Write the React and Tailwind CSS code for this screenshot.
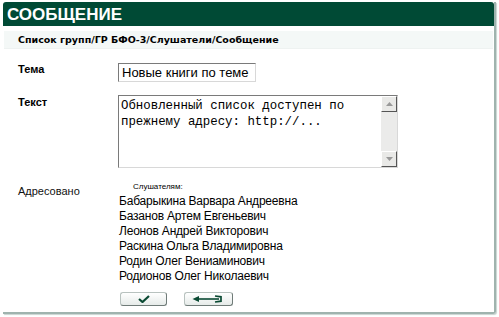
import React from "react";

const names = [
  "Бабарыкина Варвара Андреевна",
  "Базанов Артем Евгеньевич",
  "Леонов Андрей Викторович",
  "Раскина Ольга Владимировна",
  "Родин Олег Вениаминович",
  "Родионов Олег Николаевич",
];

export default function App() {
  return (
    <div className="w-[499px] h-[317px] bg-white overflow-hidden pt-[2px] pl-[3px]" style={{ fontFamily: "'Liberation Sans', Arial, sans-serif" }}>
      <div className="w-[493px] h-[312px] flex flex-col border-r-2 border-b-2 border-[#9fb3ae] rounded-br-[3px] shadow-[1px_1px_1px_#c8d4d1]">
        <div className="h-[24px] bg-[#004a35] rounded-t-[3px] flex items-center pl-[4px]">
          <span className="text-white font-bold text-[17px] leading-none" style={{ fontFamily: "'Liberation Sans', Arial, sans-serif" }}>СООБЩЕНИЕ</span>
        </div>
        <div className="mt-[5px] mx-[1px] h-[18px] bg-[#f4f8f7] border-b border-[#eef2f1] flex items-center pl-[14px]">
          <span className="text-[9.5px] font-bold text-black leading-none" style={{ fontFamily: "'DejaVu Sans', Verdana, sans-serif" }}>Список групп/ГР БФО-3/Слушатели/Сообщение</span>
        </div>
        <div className="flex flex-col pl-[15px] pt-[14px]">
          <div className="flex items-start">
            <div className="w-[100px] text-[11px] font-bold leading-[14px] -mt-[1px]">Тема</div>
            <div className="w-[138px] h-[19px] border border-[#7a7a7a] border-r-[#d8d8d8] border-b-[#d8d8d8] bg-white flex items-center pl-[3px] text-[13px] text-black leading-none">
              Новые книги по теме
            </div>
          </div>
          <div className="flex items-start mt-[13px]">
            <div className="w-[100px] text-[11px] font-bold leading-[14px]">Текст</div>
            <div className="w-[280px] h-[73px] border border-[#7a7a7a] border-r-[#d8d8d8] border-b-[#d8d8d8] bg-white flex">
              <div className="flex-1 pl-[2px] pt-[2px] text-[12.4px] leading-[16px] text-black" style={{ fontFamily: "'Liberation Mono', 'Courier New', monospace" }}>
                Обновленный список доступен по<br />прежнему адресу: http://...
              </div>
              <div className="w-[16px] bg-[#ebebea] flex flex-col justify-between">
                <div className="h-[16px] bg-[#e9e9e7] border border-[#fff] border-r-[#555] border-b-[#555] flex items-center justify-center">
                  <svg width="7" height="4" viewBox="0 0 7 4"><path d="M0 4 L3.5 0 L7 4 Z" fill="#999" /></svg>
                </div>
                <div className="h-[16px] bg-[#e9e9e7] border border-[#fff] border-r-[#555] border-b-[#555] flex items-center justify-center">
                  <svg width="7" height="4" viewBox="0 0 7 4"><path d="M0 0 L3.5 4 L7 0 Z" fill="#999" /></svg>
                </div>
              </div>
            </div>
          </div>
          <div className="flex items-start mt-[14px]">
            <div className="w-[101px] text-[11px] pt-[1px] text-[#111]">Адресовано</div>
            <div className="flex flex-col">
              <div className="text-[8px] pl-[14px] text-black leading-[10px]">Слушателям:</div>
              <div className="flex flex-col text-[12px] leading-[15px] text-black mt-[2px] tracking-[-0.2px]">
                {names.map((n) => (
                  <div key={n}>{n}</div>
                ))}
              </div>
            </div>
          </div>
          <div className="flex gap-[17px] ml-[102px] mt-[8px]">
            <div className="w-[47px] h-[14px] rounded-[3px] border border-[#b8c2bf] border-r-[#6f7b78] border-b-[#6f7b78] bg-gradient-to-b from-white to-[#e6ebe9] flex items-center justify-center">
              <svg width="12" height="8" viewBox="0 0 12 8"><path d="M1 4 L4.5 7 L11 1" stroke="#0a4a33" strokeWidth="2.2" fill="none" /></svg>
            </div>
            <div className="w-[49px] h-[14px] rounded-[3px] border border-[#b8c2bf] border-r-[#6f7b78] border-b-[#6f7b78] bg-gradient-to-b from-white to-[#e6ebe9] flex items-center justify-center pr-[3px]">
              <svg width="31" height="8" viewBox="0 0 31 8">
                <path d="M0.5 4 L7 1 L7 7 Z" fill="#0a4a33" />
                <path d="M6 4 H27" stroke="#0a4a33" strokeWidth="1.6" />
                <path d="M23 1 L29 1.8 L29 6.2 L23 7" stroke="#0a4a33" strokeWidth="1.7" fill="none" />
              </svg>
            </div>
          </div>
        </div>
      </div>
    </div>
  );
}
